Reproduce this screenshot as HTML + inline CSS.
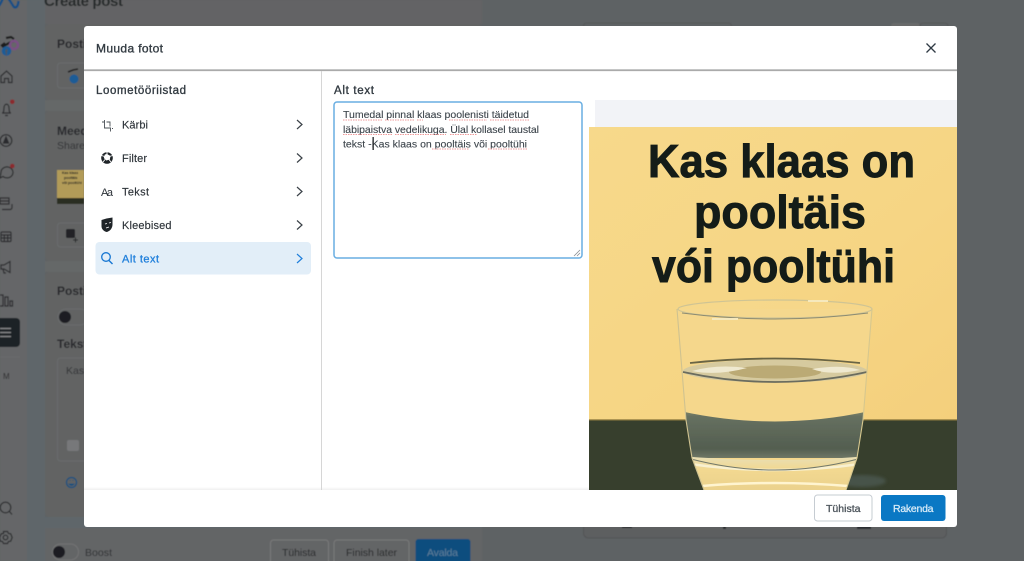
<!DOCTYPE html>
<html lang="et"><head><meta charset="utf-8"><title>Muuda fotot</title>
<style>
html,body{margin:0;padding:0;width:1024px;height:561px;overflow:hidden;background:#5e6264}
svg{display:block}
text{font-family:"Liberation Sans",sans-serif}
</style></head><body>
<svg xmlns="http://www.w3.org/2000/svg" width="1024" height="561" viewBox="0 0 1024 561">
<defs>
<linearGradient id="bgY" x1="0" y1="0" x2="1" y2="1"><stop offset="0" stop-color="#f7d98b"/><stop offset=".6" stop-color="#f6d584"/><stop offset="1" stop-color="#f4cf7c"/></linearGradient>
<linearGradient id="foot" x1="0" y1="0" x2="0" y2="1"><stop offset="0" stop-color="#fff"/><stop offset="1" stop-color="#efefef"/></linearGradient>
<linearGradient id="tableIn" x1="0" y1="0" x2="0" y2="1"><stop offset="0" stop-color="#7f8468"/><stop offset=".12" stop-color="#667060"/><stop offset=".8" stop-color="#535e50"/><stop offset="1" stop-color="#6f7766"/></linearGradient>
<linearGradient id="base" x1="0" y1="0" x2="0" y2="1"><stop offset="0" stop-color="#e8dfb8"/><stop offset=".35" stop-color="#f2d890"/><stop offset="1" stop-color="#e9d08c"/></linearGradient>
<clipPath id="imgc"><rect x="589" y="127" width="368" height="363"/></clipPath>
<clipPath id="glassc"><path d="M677 309L686 420L692 458L704 490H846L857 458L863 420L872 309Z"/></clipPath>
<filter id="b5" x="-5%" y="-5%" width="110%" height="110%"><feGaussianBlur stdDeviation=".5"/></filter>
<filter id="b1" x="-10%" y="-10%" width="120%" height="120%"><feGaussianBlur stdDeviation="1.500"/></filter>
<filter id="b3" x="-5%" y="-5%" width="110%" height="110%"><feGaussianBlur stdDeviation=".35"/></filter>
</defs>

<!-- dimmed page -->
<rect width="1024" height="561" fill="#5e6264"/>
<g filter="url(#b5)">
<rect x="0" y="0" width="27" height="561" fill="#656667"/>
<rect x="27" y="0" width="18" height="561" fill="#5f666b"/>
<rect x="45" y="0" width="437" height="24" fill="#636465"/>
<rect x="45" y="100" width="437" height="11" fill="#656768"/>
<rect x="45" y="261" width="437" height="11" fill="#656768"/>
<rect x="45" y="517" width="437" height="11" fill="#5f666b"/>
<rect x="45" y="24" width="437" height="76" rx="4" fill="#626364"/>
<rect x="45" y="111" width="437" height="150" rx="4" fill="#626364"/>
<rect x="45" y="272" width="437" height="245" rx="4" fill="#626364"/>
<rect x="45" y="528" width="437" height="33" fill="#646566"/>
<text x="44" y="6" font-size="15" font-weight="bold" fill="#27292b" textLength="79">Create post</text>

<!-- meta logo -->
<path d="M-1 6C1 3 2 1 3-2M8-2C11 2 13 6 14 7C16 8 18 7 18.500 1" fill="none" stroke="#164f86" stroke-width="2.400"/>

<!-- sidebar -->
<path d="M2 47l7-4 5-2M6 38l5-1 3 2M1 46l4-3" stroke="#1c1d1e" stroke-width="2.200" fill="none"/>
<circle cx="14" cy="45" r="4" fill="none" stroke="#7b4f85" stroke-width="2.400"/>
<circle cx="6.500" cy="51" r="4.800" fill="#1a5b96"/><text x="5" y="55" font-size="8" font-weight="bold" fill="#555">f</text>
<g fill="none" stroke="#2a2c2e" stroke-width="1.200">
<path d="M1 76l5.500-5 5.500 5v6.500H8.500v-4h-4v4H1z"/>
<path d="M2 113h9M3 113c1-2 1-3 1-5 0-5 5-5 5 0 0 2 0 3 1 5M5 115.500h3"/>
<circle cx="6" cy="140.500" r="5.800"/>
<path d="M6 137l2.500 6h-5z" fill="#2a2c2e"/>
<path d="M1 172.500a6 5.500 0 1 1 2 4l-3 1.500z"/>
<path d="M0 198h9v6H0zM0 201h9M12 204v3.500a2 2 0 0 1-2 2H2"/>
<rect x="1" y="232" width="10" height="9.500" rx="1"/><path d="M1 235h10M4.300 235v6.500M7.700 235v6.500M1 238h10"/>
<path d="M1 265h3l6-3.500v11L4 269H1zM3 269l1 4h2"/>
<path d="M0 295h3v11H0M5 297v9h3v-9zM10 301h2.500v5H10z"/>
<circle cx="5.500" cy="507.500" r="5.300"/><path d="M9.500 511.500l2.500 3"/>
<circle cx="5.500" cy="537.500" r="2.300"/><path d="M3.500 531.500h4l1 2 2.200.3 1.500 3.700-1.500 3.700-2.200.3-1 2h-4l-1-2-2.200-.3L-.5 537.500l1.800-3.700 2.200-.3z"/>
</g>
<circle cx="12.300" cy="101.800" r="2.300" fill="#8b2a2d"/>
<circle cx="12.300" cy="166" r="2.300" fill="#8b2a2d"/>
<rect x="-5" y="318" width="25" height="29" rx="4" fill="#1f2327"/>
<path d="M0 328.500h11M0 332.500h11M0 336.500h11" stroke="#8a8c8e" stroke-width="1.300"/>
<rect x="0" y="356.500" width="20" height="1" fill="#6a6b6c"/>
<text x="3" y="379" font-size="8" fill="#2a2c2e">M</text>

<!-- left column remnants -->
<text x="57" y="48" font-size="12" font-weight="bold" fill="#26282a">Postit</text>
<rect x="57.500" y="63" width="60" height="25" rx="3" fill="none" stroke="#6b6c6d"/>
<path d="M68 72l5-2 5-1" stroke="#1c1d1e" stroke-width="1.500" fill="none"/>
<circle cx="74" cy="79" r="4.500" fill="#1a5b96"/>
<text x="57" y="135" font-size="12" font-weight="bold" fill="#26282a">Meedia</text>
<text x="57" y="149" font-size="10.500" fill="#303234">Share</text>
<rect x="57" y="170" width="27" height="34" fill="#b29b58"/><rect x="57" y="198" width="27" height="6" fill="#2c2e22"/>
<text x="62" y="174" font-size="3.500" font-weight="bold" fill="#222">Kas klaas</text>
<text x="64" y="179" font-size="3.500" font-weight="bold" fill="#222">pooltäis</text>
<text x="62" y="184" font-size="3.500" font-weight="bold" fill="#222">või pooltühi</text>
<rect x="57.500" y="223" width="50" height="24" rx="3" fill="none" stroke="#6b6c6d"/>
<rect x="66" y="229" width="9" height="9" rx="1.500" fill="#222426"/><path d="M73 240h5M75.500 237.500v5" stroke="#222426"/>
<text x="57" y="295" font-size="12" font-weight="bold" fill="#26282a">Postitus</text>
<rect x="58" y="309" width="30" height="16" rx="8" fill="none" stroke="#6b6c6d"/><circle cx="65" cy="317" r="6" fill="#1a1e23"/>
<text x="57" y="348" font-size="12" font-weight="bold" fill="#26282a">Tekst</text>
<rect x="57.500" y="358" width="60" height="103" rx="3" fill="none" stroke="#6b6c6d"/>
<text x="66" y="374" font-size="10.500" fill="#303234">Kas</text>
<rect x="67" y="440" width="12" height="11" rx="2" fill="#77787a"/>
<circle cx="71.500" cy="482.500" r="5" fill="none" stroke="#13507f" stroke-width="1.300"/><path d="M69 484c1.500 2 3.500 2 5 0zM69.500 480.500h1M72.500 480.500h1" stroke="#13507f" fill="#13507f" stroke-width=".8"/>

<!-- bottom bar -->
<rect x="52.500" y="544" width="26" height="16" rx="8" fill="none" stroke="#737475"/><circle cx="59" cy="552" r="6" fill="#1a1e23"/>
<text x="85" y="556" font-size="10.500" fill="#2c2e30" textLength="27">Boost</text>
<rect x="270.500" y="540" width="58" height="26" rx="3" fill="none" stroke="#7a7b7c"/>
<text x="282" y="556" font-size="10.500" fill="#232527" textLength="34">Tühista</text>
<rect x="334" y="540" width="75" height="26" rx="3" fill="none" stroke="#7a7b7c"/>
<text x="346" y="556" font-size="10.500" fill="#232527" textLength="51">Finish later</text>
<rect x="415.500" y="539" width="55" height="28" rx="3" fill="#0f4d7e"/>
<text x="427" y="556" font-size="10.500" fill="#5c7f9a" textLength="31">Avalda</text>

<!-- right remnants -->
<rect x="583.500" y="23" width="148" height="20" rx="3" fill="none" stroke="#565859"/>
<rect x="891" y="23" width="29" height="10" rx="3" fill="#696a6b"/>
<rect x="920" y="23" width="28" height="10" rx="3" fill="none" stroke="#565859"/>
<rect x="583.500" y="510" width="363" height="28" rx="5" fill="#5d5f60" stroke="#535556"/>
<rect x="622" y="523" width="10" height="5" fill="#2c2e30"/><rect x="723" y="523" width="3" height="6" fill="#2c2e30"/><rect x="857" y="523" width="14" height="6" fill="#2c2e30"/>
</g>

<!-- modal -->
<rect x="84" y="26" width="873" height="501" rx="3" fill="#fff"/>
<rect x="84" y="69.500" width="873" height="1.200" fill="#8b8c8d"/>
<rect x="84" y="70.500" width="873" height=".7" fill="#c8c8c8"/>
<text x="96" y="52.500" font-size="12" fill="#333b42" stroke="#333b42" stroke-width=".35" textLength="67">Muuda fotot</text>
<path d="M926.500 43.500l9 9M935.500 43.500l-9 9" stroke="#2f3a44" stroke-width="1.300" fill="none"/>

<rect x="321" y="71" width="1" height="419" fill="#d6d6d6"/>
<text x="96" y="94" font-size="11.500" fill="#333b42" stroke="#333b42" stroke-width=".35" textLength="90">Loometööriistad</text>

<!-- menu -->
<g font-size="11" fill="#2d3339" stroke="#2d3339" stroke-width=".15">
<text x="122" y="128.500" textLength="26">Kärbi</text>
<text x="122" y="162" textLength="25">Filter</text>
<text x="122" y="195.500" textLength="27">Tekst</text>
<text x="122" y="229" textLength="49.500">Kleebised</text>
</g>
<path d="M104.500 120v8h6v3.500M102 122h2.500M106.500 122h3.500v4.500M112 128.500h1" stroke="#4a5056" stroke-width=".9" fill="none"/>
<circle cx="107" cy="158" r="5.800" fill="#1f2428"/>
<path d="M107 154l3.500 2-.7 3.500-3.500 1-2.500-2.500 1-3.500z" fill="#fff"/>
<path d="M107 152v3M112.500 155.500l-3 1M111 162l-2-2.500M103 162l2-2.500M101.500 155.500l3 1" stroke="#fff" stroke-width=".9"/>
<text x="101" y="196" font-size="11" fill="#2d3339" textLength="12">Aa</text>
<path d="M101.500 220l5-1.500 6-1v7c0 4-3 7-6 7.500-3-1-5-3-5-6z" fill="#1f2428"/>
<path d="M105 224l2-.5M109 223l2-.5M106 228l3-1" stroke="#fff" stroke-width=".9"/>

<rect x="95.500" y="242" width="215.500" height="32.500" rx="4" fill="#e2eef8"/>
<circle cx="106" cy="257" r="4.300" fill="none" stroke="#1877d2" stroke-width="1.300"/>
<path d="M109 260.500l3.500 3.500" stroke="#1877d2" stroke-width="1.400"/>
<text x="122" y="262.500" font-size="11" fill="#1f7fdb" stroke="#1f7fdb" stroke-width=".3" textLength="37">Alt text</text>

<g fill="none" stroke="#3a4147" stroke-width="1.200">
<path d="M297 120l5 4.500-5 4.500"/><path d="M297 153.500l5 4.500-5 4.500"/><path d="M297 187l5 4.500-5 4.500"/><path d="M297 220.500l5 4.500-5 4.500"/>
</g>
<path d="M297 254l5 4.500-5 4.500" fill="none" stroke="#1f7fdb" stroke-width="1.200"/>

<!-- alt text panel -->
<text x="334" y="94" font-size="11.500" fill="#333b42" stroke="#333b42" stroke-width=".35" textLength="40">Alt text</text>
<rect x="334" y="102" width="248" height="156" rx="3" fill="#fff" stroke="#69aee2" stroke-width="1.500"/>
<g font-size="10.500" fill="#3c444b" stroke="#3c444b" stroke-width=".1">
<text x="343" y="118" textLength="186">Tumedal pinnal klaas poolenisti täidetud</text>
<text x="343" y="133" textLength="196">läbipaistva vedelikuga. Ülal kollasel taustal</text>
<text x="343" y="147.500" textLength="184">tekst -Kas klaas on pooltäis või pooltühi</text>
</g>
<g stroke="#ef9a9a" stroke-width="1" stroke-dasharray="1.500 1" fill="none">
<path d="M343 120h40M385 120h30M417 120h6M490 120h39M449 120h38"/>
<path d="M343 134.500h49M395 134.500h51M450 134.500h27"/>
<path d="M432 149h37M488 149h39"/>
</g>
<rect x="372.500" y="137" width="1.300" height="13" fill="#1d2023"/>
<path d="M574 256l6-6M577 256l3-3" stroke="#8a8f94" stroke-width=".8"/>

<!-- image -->
<rect x="595" y="100" width="362" height="27" fill="#f2f3f7"/>
<g clip-path="url(#imgc)">
<rect x="589" y="127" width="368" height="294" fill="url(#bgY)"/>
<rect x="589" y="420" width="368" height="70" fill="#373f2d"/>
<rect x="589" y="419.300" width="368" height="1.200" fill="#8f7b3f"/>
<ellipse cx="862" cy="481" rx="24" ry="6" fill="#465249" filter="url(#b1)"/>

<!-- glass -->
<path d="M677 309L686 420L692 458L704 490H846L857 458L863 420L872 309Z" fill="#f5d78c"/>
<g clip-path="url(#glassc)">
<path d="M680 411Q775 432 870 411V458H680Z" fill="url(#tableIn)" filter="url(#b3)"/>
<g filter="url(#b3)">
<path d="M680 456Q775 464 870 456V495H680Z" fill="url(#base)"/>
<path d="M690 464Q775 476 860 464" fill="none" stroke="#f8f0d0" stroke-width="2.500"/>
<path d="M702 486Q775 480 848 486" fill="none" stroke="#fff4cf" stroke-width="2.500"/>
</g>
<path d="M691 459Q775 481 858 459" fill="none" stroke="#73796a" stroke-width="1.100"/>
</g>
<g filter="url(#b3)">
<ellipse cx="775" cy="371" rx="92" ry="11.500" fill="#d6ca9f"/>
<ellipse cx="775" cy="372" rx="46" ry="6.500" fill="#bbaa74"/>
<path d="M692 371q25-7 55-3q-30 8-55 3M812 369q30-5 48 1q-30 6-48-1" fill="#efe9d0"/>
<path d="M690 363Q775 354 860 363" fill="none" stroke="#6a6545" stroke-width="1.800"/>
<path d="M683 372Q775 392 867 372" fill="none" stroke="#6a6c5e" stroke-width="1.700"/>
<path d="M677 309L686 420L692 458L704 490" fill="none" stroke="#cfc290" stroke-width="1.100"/>
<path d="M872 309L863 420L857 458L846 490" fill="none" stroke="#d6c78e" stroke-width="1.100"/>
<ellipse cx="775" cy="309" rx="97" ry="9" fill="#f6da92" fill-opacity=".5" stroke="#cfc494" stroke-width="1.200"/>
<path d="M682 313Q775 325 868 313" fill="none" stroke="#8d8c72" stroke-width="1"/>
<path d="M712 319h26M808 301h20" stroke="#f6e9bd" stroke-width="2"/>
</g>

<g font-weight="bold" fill="#141c18" stroke="#141c18" stroke-width=".9" font-size="46">
<text x="648" y="177" textLength="267" lengthAdjust="spacingAndGlyphs">Kas klaas on</text>
<text x="694" y="228" textLength="172" lengthAdjust="spacingAndGlyphs">pooltäis</text>
<text x="652" y="282" textLength="243" lengthAdjust="spacingAndGlyphs">vói pooltühi</text>
</g>
</g>

<!-- footer -->
<rect x="84" y="487" width="505" height="3" fill="url(#foot)"/>
<rect x="321" y="487" width="1" height="3" fill="#d6d6d6"/>
<rect x="814.500" y="495" width="57.500" height="26" rx="3" fill="#fff" stroke="#c6ccd2"/>
<text x="826" y="512" font-size="10.500" fill="#4a5259" stroke="#4a5259" stroke-width=".3" textLength="34.500">Tühista</text>
<rect x="881" y="495" width="64.500" height="26" rx="3" fill="#0a78c4"/>
<text x="893" y="512" font-size="10.500" fill="#d9ecf8" stroke="#d9ecf8" stroke-width=".25" textLength="40.500">Rakenda</text>
</svg>
</body></html>
